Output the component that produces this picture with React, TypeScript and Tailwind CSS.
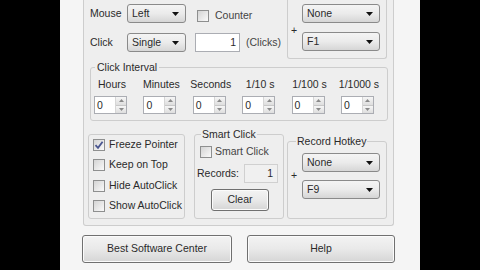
import React from "react";

const Select = ({ value, w = "w-[78px]" }: { value: string; w?: string }) => (
  <div
    className={`${w} h-[19px] rounded-[3px] border border-[#8a8a8a] bg-gradient-to-b from-[#f4f4f4] via-[#ebebeb] to-[#d6d6d6] flex items-center justify-between pl-[4px] pr-[6px]`}
  >
    <span>{value}</span>
    <svg width="7" height="4" viewBox="0 0 7 4">
      <path d="M0 0h7L3.5 4z" fill="#111" />
    </svg>
  </div>
);

const Check = ({ checked = false }: { checked?: boolean }) => (
  <div className="w-[12px] h-[12px] border border-[#8e8f8f] bg-gradient-to-br from-[#d4d4d4] to-[#fafafa] flex items-center justify-center shrink-0">
    {checked && (
      <svg width="10" height="10" viewBox="0 0 10 10">
        <path d="M1.5 5.2 L4 7.8 L8.6 1.8" fill="none" stroke="#4a5690" strokeWidth="1.8" />
      </svg>
    )}
  </div>
);

const Spinner = () => (
  <div className="w-[33px] h-[18px] border border-[#abadb3] bg-white flex">
    <span className="flex-1 pl-[2px] leading-[16px]">0</span>
    <div className="w-[11px] flex flex-col border-l border-[#d6d6d6]">
      <div className="flex-1 bg-gradient-to-b from-[#f6f6f6] to-[#dedede] flex items-center justify-center border-b border-[#c8c8c8]">
        <svg width="5" height="3" viewBox="0 0 5 3">
          <path d="M0 3h5L2.5 0z" fill="#8a8a8a" />
        </svg>
      </div>
      <div className="flex-1 bg-gradient-to-b from-[#f6f6f6] to-[#dedede] flex items-center justify-center">
        <svg width="5" height="3" viewBox="0 0 5 3">
          <path d="M0 0h5L2.5 3z" fill="#8a8a8a" />
        </svg>
      </div>
    </div>
  </div>
);

const Button = ({ label, w, h }: { label: string; w: string; h: string }) => (
  <div
    className={`${w} ${h} rounded-[3px] border border-[#707070] bg-gradient-to-b from-[#f3f3f3] via-[#e9e9e9] to-[#d5d5d5] flex items-center justify-center shadow-[inset_0_0_0_1px_#fbfbfb]`}
  >
    {label}
  </div>
);

const intervals = ["Hours", "Minutes", "Seconds", "1/10 s", "1/100 s", "1/1000 s"];
const options = ["Freeze Pointer", "Keep on Top", "Hide AutoClick", "Show AutoClick"];

export default function App() {
  return (
    <div className="w-[480px] h-[270px] bg-black flex justify-center overflow-hidden font-['Liberation_Sans',Arial,sans-serif] text-[10.5px] text-[#2a2a2a]">
      <div className="w-[360px] h-full bg-[#f5f5f5] flex flex-col">
        <div className="ml-[23px] w-[311px] h-[226px] border-x border-b border-[#cdcdcd] rounded-b-[3px] bg-[#eeeeee] flex flex-col">
          {/* top controls */}
          <div className="h-[60px] flex">
            <div className="ml-[6px] w-[197px] pt-[4px] flex flex-col gap-[10px]">
              <div className="flex items-center h-[19px]">
                <span className="w-[37px]">Mouse</span>
                <Select value="Left" w="w-[59px]" />
                <div className="ml-[11px] mt-[5px] flex items-center">
                  <Check />
                  <span className="ml-[6px] text-[#444]">Counter</span>
                </div>
              </div>
              <div className="flex items-center h-[19px]">
                <span className="w-[37px]">Click</span>
                <Select value="Single" w="w-[59px]" />
                <div className="ml-[9px] w-[45px] h-[19px] border border-[#abadb3] bg-white text-right pr-[3px] leading-[17px]">
                  1
                </div>
                <span className="ml-[6px] text-[#444]">(Clicks)</span>
              </div>
            </div>
            <div className="w-[100px] h-[59px] border-x border-b border-[#cdcdcd] rounded-b-[3px] flex">
              <div className="w-[14px] pl-[3px] pt-[23px]">+</div>
              <div className="pt-[4px] flex flex-col gap-[9px]">
                <Select value="None" />
                <Select value="F1" />
              </div>
            </div>
          </div>

          {/* click interval */}
          <fieldset className="ml-[6px] mt-[1px] w-[298px] h-[60px] border border-[#cdcdcd] rounded-[3px]">
            <legend className="ml-[4px] px-[2px] leading-[12px]">Click Interval</legend>
            <div className="pl-[3px] flex gap-[16.4px]">
              {intervals.map((t) => (
                <div key={t} className="w-[33px] flex flex-col items-center">
                  <span className="mt-[5px] h-[12px] leading-[12px] whitespace-nowrap pl-[3px]">{t}</span>
                  <div className="mt-[6px]">
                    <Spinner />
                  </div>
                </div>
              ))}
            </div>
          </fieldset>

          {/* lower groups */}
          <div className="flex items-start">
            <div className="ml-[4px] mt-[13px] w-[97px] h-[85px] border border-[#cdcdcd] rounded-[3px] pl-[4px] pt-[3px] flex flex-col gap-[7.5px]">
              {options.map((o, i) => (
                <div key={o} className="flex items-center h-[13px]">
                  <Check checked={i === 0} />
                  <span className="ml-[4px] whitespace-nowrap">{o}</span>
                </div>
              ))}
            </div>

            <fieldset className="ml-[9px] mt-[7px] w-[90px] h-[91px] border border-[#cdcdcd] rounded-[3px]">
              <legend className="ml-[6px] px-[1px] leading-[12px]">Smart Click</legend>
              <div className="flex items-center pl-[5px] mt-[6px] h-[12px]">
                <Check />
                <span className="ml-[3px] text-[#444]">Smart Click</span>
              </div>
              <div className="flex items-center pl-[2px] mt-[6px]">
                <span className="w-[47px]">Records:</span>
                <div className="w-[34px] h-[19px] border border-[#d0d0d0] bg-[#f0f0f0] text-right pr-[4px] leading-[17px]">
                  1
                </div>
              </div>
              <div className="pl-[16px] mt-[6px]">
                <Button label="Clear" w="w-[58px]" h="h-[22px]" />
              </div>
            </fieldset>

            <fieldset className="ml-[3px] mt-[14px] w-[100px] h-[84px] border border-[#cdcdcd] rounded-[3px]">
              <legend className="ml-[8px] px-[1px] leading-[12px]">Record Hotkey</legend>
              <div className="flex">
                <div className="w-[14px] pl-[3px] pt-[21px]">+</div>
                <div className="mt-[6px] flex flex-col gap-[8px]">
                  <Select value="None" />
                  <Select value="F9" />
                </div>
              </div>
            </fieldset>
          </div>
        </div>

        <div className="flex mt-[9px] ml-[22px] gap-[15px]">
          <Button label="Best Software Center" w="w-[150px]" h="h-[28px]" />
          <Button label="Help" w="w-[148px]" h="h-[28px]" />
        </div>
      </div>
    </div>
  );
}
